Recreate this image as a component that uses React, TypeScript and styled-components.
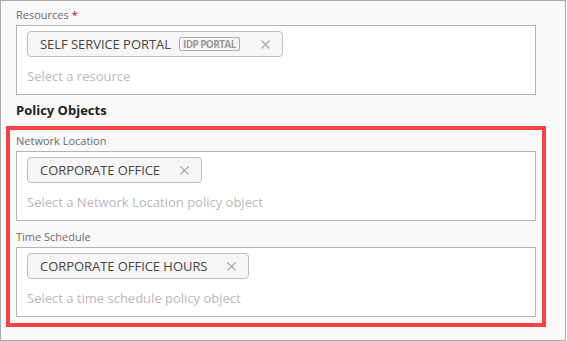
import React from "react";
import styled, { createGlobalStyle } from "styled-components";

const Global = createGlobalStyle`
  html, body { margin: 0; padding: 0; background: #ffffff; }
  body { font-family: "Open Sans", "Liberation Sans", sans-serif; }
  * { box-sizing: border-box; }
`;

const Frame = styled.div`
  width: 566px;
  height: 341px;
  border: 1px solid #ababab;
  background: #f9f9f9;
  padding: 6px 29px 14px 15px;
  display: flex;
  flex-direction: column;
`;

const Field = styled.div`
  display: flex;
  flex-direction: column;
  margin-top: ${(p: { $gap?: number }) => p.$gap ?? 0}px;
`;

const Label = styled.div`
  font-size: 11px;
  line-height: 16px;
  color: #6b6b6b;
  margin-bottom: 2px;
  white-space: nowrap;
`;

const Req = styled.span`
  color: #d0021b;
`;

const Box = styled.div`
  height: 70px;
  background: #ffffff;
  border: 1px solid #b3b3b3;
  padding: 5px 10px 8px 10px;
  display: flex;
  flex-direction: column;
  align-items: flex-start;
`;

const Chip = styled.div`
  height: 26px;
  display: flex;
  align-items: center;
  border: 1px solid #bcbcbc;
  border-radius: 4px;
  background: #f6f6f6;
  padding: 0 12px;
  font-size: 13px;
  letter-spacing: -0.05px;
  color: #454545;
  white-space: nowrap;
`;

const Badge = styled.span`
  margin-left: 8px;
  height: 14px;
  padding: 0 3px;
  border: 1px solid #ababab;
  border-radius: 2px;
  font-size: 10px;
  font-weight: 700;
  color: #9a9a9a;
  display: flex;
  align-items: center;
  letter-spacing: -0.6px;
`;

const Close = styled.span`
  margin-left: ${(p: { $gap: number }) => p.$gap}px;
  width: 9px;
  height: 9px;
  display: flex;
`;

const Placeholder = styled.div`
  margin-top: 9px;
  font-size: 13px;
  line-height: 20px;
  color: #b9b9b9;
  white-space: nowrap;
`;

const Title = styled.div`
  margin-top: 6px;
  font-size: 13px;
  line-height: 18px;
  font-weight: 700;
  color: #222222;
`;

const Highlight = styled.div`
  margin: 7px -10px 0 -10px;
  border: 4px solid #fd4044;
  padding: 3px 6px 6px 6px;
  display: flex;
  flex-direction: column;
`;

const X = () => (
  <svg width="9" height="9" viewBox="0 0 9 9">
    <path d="M0.5 0.5 L8.5 8.5 M8.5 0.5 L0.5 8.5" stroke="#a9a9a9" strokeWidth="1.1" />
  </svg>
);

type SelectProps = {
  label: React.ReactNode;
  value: string;
  badge?: string;
  placeholder: string;
  gap?: number;
};

const Select = ({ label, value, badge, placeholder, gap }: SelectProps) => (
  <Field $gap={gap}>
    <Label>{label}</Label>
    <Box>
      <Chip>
        {value}
        {badge && <Badge>{badge}</Badge>}
        <Close $gap={badge ? 21 : 20}>
          <X />
        </Close>
      </Chip>
      <Placeholder>{placeholder}</Placeholder>
    </Box>
  </Field>
);

export default function App() {
  return (
    <>
      <Global />
      <Frame>
        <Select
          label={
            <>
              Resources <Req>*</Req>
            </>
          }
          value="SELF SERVICE PORTAL"
          badge="IDP PORTAL"
          placeholder="Select a resource"
        />
        <Title>Policy Objects</Title>
        <Highlight>
          <Select
            label="Network Location"
            value="CORPORATE OFFICE"
            placeholder="Select a Network Location policy object"
          />
          <Select
            label="Time Schedule"
            value="CORPORATE OFFICE HOURS"
            placeholder="Select a time schedule policy object"
            gap={8}
          />
        </Highlight>
      </Frame>
    </>
  );
}
